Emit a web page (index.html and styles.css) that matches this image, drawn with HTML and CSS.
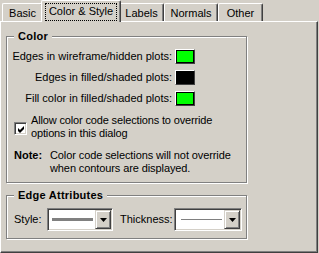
FILE: index.html
```html
<!DOCTYPE html>
<html>
<head>
<meta charset="utf-8">
<link rel="stylesheet" href="styles.css">
</head>
<body>
<div class="tabs">
  <div class="tab tab-basic">Basic</div>
  <div class="tab tab-active tab-cs"><span class="focus">Color &amp; Style</span></div>
  <div class="tab tab-labels">Labels</div>
  <div class="tab tab-normals">Normals</div>
  <div class="tab tab-other">Other</div>
</div>
<div class="panel">
  <div class="group group-color">
    <span class="legend">Color</span>
    <div class="rows">
      <span class="lbl">Edges in wireframe/hidden plots:</span><span class="swatch"><span class="fill green"></span></span>
      <span class="lbl">Edges in filled/shaded plots:</span><span class="swatch"><span class="fill black"></span></span>
      <span class="lbl">Fill color in filled/shaded plots:</span><span class="swatch"><span class="fill green"></span></span>
    </div>
    <div class="check-row">
      <span class="checkbox"><svg width="9" height="9" viewBox="0 0 9 9"><polygon points="1,3 3,5 7,1 7,4 3,8 1,6" fill="#000"/></svg></span>
      <span class="check-text">Allow color code selections to override<br>options in this dialog</span>
    </div>
    <div class="note">
      <span class="note-label">Note:</span>
      <span class="note-text">Color code selections will not override<br>when contours are displayed.</span>
    </div>
  </div>
  <div class="group group-edge">
    <span class="legend">Edge Attributes</span>
    <div class="edge-row">
      <span class="lbl-style">Style:</span>
      <div class="combo combo-style">
        <div class="combo-value"><span class="line-thick"></span></div>
        <div class="combo-btn"><svg width="7" height="4" viewBox="0 0 7 4"><polygon points="0,0 7,0 3.5,4" fill="#000"/></svg></div>
      </div>
      <span class="lbl-thick">Thickness:</span>
      <div class="combo combo-thick">
        <div class="combo-value"><span class="line-thin"></span></div>
        <div class="combo-btn"><svg width="7" height="4" viewBox="0 0 7 4"><polygon points="0,0 7,0 3.5,4" fill="#000"/></svg></div>
      </div>
    </div>
  </div>
</div>
</body>
</html>
```
FILE: styles.css
```css
* { box-sizing: border-box; }
html, body {
  margin: 0;
  padding: 0;
  background: #d4d0c8;
  width: 319px;
  height: 253px;
  overflow: hidden;
}
body {
  font-family: "Liberation Sans", Arial, sans-serif;
  font-size: 11px;
  line-height: 13px;
  color: #000;
}

/* Tabs */
.tabs {
  display: flex;
  align-items: flex-end;
  height: 21px;
  padding-left: 2px;
}
.tab {
  height: 18px;
  background: #d4d0c8;
  border-top: 1px solid #fff;
  border-left: 1px solid #fff;
  border-right: 1px solid #404040;
  box-shadow: inset -1px 0 0 #808080;
  border-radius: 2px 2px 0 0;
  display: flex;
  justify-content: center;
  align-items: flex-start;
  padding-top: 3px;
  white-space: nowrap;
}
.tab-basic { width: 41px; }
.tab-cs { width: 76px; }
.tab-labels { width: 45px; }
.tab-normals { width: 54px; }
.tab-other { width: 45px; }
.tab-active {
  width: 80px;
  height: 22px;
  margin: 0 -2px -1px -2px;
  position: relative;
  z-index: 1;
  padding-top: 2px;
}
.focus {
  display: block;
  border: 1px dotted #000;
  padding: 1px 3px 2px 3px;
  line-height: 13px;
}

/* Panel */
.panel {
  width: 318px;
  height: 232px;
  border-top: 1px solid #fff;
  border-left: 1px solid #fff;
  border-right: 1px solid #404040;
  border-bottom: 1px solid #404040;
  box-shadow: inset -1px -1px 0 #808080;
  padding: 14px 0 0 5px;
}

/* Group boxes */
.group {
  position: relative;
  width: 241px;
  border: 1px solid #808080;
  box-shadow: inset 1px 1px 0 #fff, 1px 1px 0 #fff;
}
.legend {
  position: absolute;
  top: -7px;
  left: 7px;
  padding: 0 4px 0 4px;
  background: #d4d0c8;
  font-weight: bold;
  line-height: 13px;
  letter-spacing: 0.25px;
}
.group-color {
  height: 147px;
  padding-top: 9px;
}
.group-edge {
  height: 44px;
  margin-top: 12px;
  padding: 12px 0 0 7px;
}

/* Color rows */
.rows {
  display: grid;
  grid-template-columns: 165px 20px;
  grid-auto-rows: 21px;
  column-gap: 3px;
  align-items: center;
}
.lbl {
  justify-self: end;
  white-space: nowrap;
}
.swatch {
  width: 20px;
  height: 15px;
  border-top: 1px solid #fff;
  border-left: 1px solid #fff;
  border-right: 1px solid #404040;
  border-bottom: 1px solid #404040;
  display: flex;
}
.fill {
  flex: 1;
  border: 1px solid #000;
}
.green { background: #00ff00; }
.black { background: #000; }

/* Checkbox */
.check-row {
  display: flex;
  align-items: flex-start;
  margin-top: 5px;
  padding-left: 7px;
}
.check-text { letter-spacing: -0.15px; }
.checkbox {
  width: 13px;
  height: 13px;
  margin-top: 8px;
  margin-right: 4px;
  background: #fff;
  border-top: 1px solid #808080;
  border-left: 1px solid #808080;
  border-right: 1px solid #fff;
  border-bottom: 1px solid #fff;
  box-shadow: inset 1px 1px 0 #404040, inset -1px -1px 0 #d4d0c8;
  display: flex;
  align-items: center;
  justify-content: center;
  flex: none;
}
.checkbox svg { display: block; margin: 1px 0 0 1px; }

/* Note */
.note {
  display: flex;
  margin-top: 9px;
  padding-left: 7px;
}
.note-label {
  width: 36px;
  font-weight: bold;
  flex: none;
}
.note-text { letter-spacing: -0.1px; }

/* Edge row */
.edge-row {
  display: flex;
  align-items: center;
  height: 23px;
}
.lbl-style { width: 33px; }
.lbl-thick { width: 54px; margin-left: 7px; }
.combo {
  height: 23px;
  display: flex;
  background: #fff;
  border-top: 1px solid #808080;
  border-left: 1px solid #808080;
  border-right: 1px solid #fff;
  border-bottom: 1px solid #fff;
  box-shadow: inset 1px 1px 0 #404040, inset -1px -1px 0 #d4d0c8;
  padding: 1px;
}
.combo-style { width: 66px; }
.combo-thick { width: 68px; }
.combo-value {
  flex: 1;
  display: flex;
  align-items: center;
  padding-left: 3px;
  padding-right: 2px;
}
.line-thick {
  display: block;
  width: 100%;
  height: 3px;
  background: #808080;
}
.line-thin {
  display: block;
  width: 100%;
  height: 1px;
  background: #808080;
  margin-left: 2px;
}
.combo-btn {
  width: 16px;
  background: #d4d0c8;
  border-top: 1px solid #d4d0c8;
  border-left: 1px solid #d4d0c8;
  border-right: 1px solid #404040;
  border-bottom: 1px solid #404040;
  box-shadow: inset 1px 1px 0 #fff, inset -1px -1px 0 #808080;
  display: flex;
  align-items: center;
  justify-content: center;
  flex: none;
}
.combo-btn svg { display: block; }
```
